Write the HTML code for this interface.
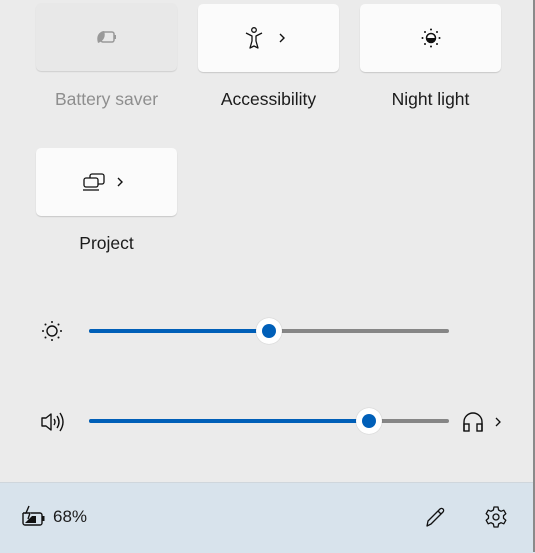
<!DOCTYPE html>
<html><head><style>
body{margin:0;width:535px;height:552px;overflow:hidden;background:#ebebeb;font-family:"Segoe UI","Liberation Sans",sans-serif;position:relative}
.b{position:absolute;width:141px;height:68px;background:#fbfbfb;border-radius:5px;box-shadow:0 1px 1px rgba(0,0,0,.15);display:flex;align-items:center;justify-content:center}
.l{position:absolute;width:141px;text-align:center;font-size:17.5px;color:#1b1b1b}
.tr{position:absolute;height:4px;border-radius:2px;background:#868686}
.tf{position:absolute;height:4px;border-radius:2px;background:#005fb8}
.th{position:absolute;width:26px;height:26px;border-radius:50%;background:#fff;box-shadow:0 0 1px rgba(0,0,0,.3)}
.th::after{content:"";position:absolute;left:6px;top:6px;width:14px;height:14px;border-radius:50%;background:#005fb8}
svg{display:block}
</style></head><body>
<div class="b" style="left:36px;top:3px;background:#e8e8e8;box-shadow:0 1px 1px rgba(0,0,0,.12)">
<svg width="26" height="18" viewBox="0 0 26 18"><rect x="7" y="4" width="13" height="10" rx="2" fill="none" stroke="#999" stroke-width="1.5"/><rect x="20" y="7" width="2" height="4" fill="#999"/><path d="M10 3 C4 4 2 9 4 15 C10 13 12 8 10 3Z" fill="#999"/></svg></div>
<div class="b" style="left:198px;top:4px">
<svg width="50" height="24" viewBox="0 0 50 24"><circle cx="10" cy="4" r="2.3" fill="none" stroke="#111" stroke-width="1.3"/><path d="M2 7 L8 10 L8 15 L6 22 L10 20 L14 22 L12 15 L12 10 L18 7" fill="none" stroke="#111" stroke-width="1.3" stroke-linejoin="round"/><path d="M36 8 L40 12 L36 16" fill="none" stroke="#111" stroke-width="1.4"/></svg></div>
<div class="b" style="left:360px;top:4px">
<svg width="24" height="24" viewBox="0 0 24 24"><circle cx="12" cy="12" r="4.5" fill="none" stroke="#111" stroke-width="1.5"/><path d="M12 12 m-4.5 0 a4.5 4.5 0 0 0 9 0Z" fill="#111"/><g fill="#111"><circle cx="12" cy="3.5" r="1"/><circle cx="12" cy="20.5" r="1"/><circle cx="3.5" cy="12" r="1"/><circle cx="20.5" cy="12" r="1"/><circle cx="6" cy="6" r="1"/><circle cx="18" cy="6" r="1"/><circle cx="6" cy="18" r="1"/><circle cx="18" cy="18" r="1"/></g></svg></div>
<div class="b" style="left:36px;top:148px">
<svg width="50" height="24" viewBox="0 0 50 24"><rect x="8" y="4" width="14" height="10" rx="2" fill="none" stroke="#111" stroke-width="1.3"/><rect x="2" y="8" width="14" height="9" rx="2" fill="#fbfbfb" stroke="#111" stroke-width="1.3"/><path d="M1 20 H17" stroke="#111" stroke-width="1.3"/><path d="M36 8 L40 12 L36 16" fill="none" stroke="#111" stroke-width="1.4"/></svg></div>
<div class="l" style="left:36px;top:89px;color:#8e8e8e">Battery saver</div>
<div class="l" style="left:198px;top:89px">Accessibility</div>
<div class="l" style="left:360px;top:89px">Night light</div>
<div class="l" style="left:36px;top:233px">Project</div>

<svg style="position:absolute;left:40px;top:319px" width="24" height="24" viewBox="0 0 24 24"><circle cx="12" cy="12" r="5" fill="none" stroke="#111" stroke-width="1.4"/><g fill="#111"><circle cx="12" cy="3" r="1"/><circle cx="12" cy="21" r="1"/><circle cx="3" cy="12" r="1"/><circle cx="21" cy="12" r="1"/><circle cx="5.5" cy="5.5" r="1"/><circle cx="18.5" cy="5.5" r="1"/><circle cx="5.5" cy="18.5" r="1"/><circle cx="18.5" cy="18.5" r="1"/></g></svg>
<div class="tr" style="left:89px;top:329px;width:360px"></div>
<div class="tf" style="left:89px;top:329px;width:180px"></div>
<div class="th" style="left:256px;top:318px"></div>

<svg style="position:absolute;left:40px;top:410px" width="26" height="24" viewBox="0 0 26 24"><path d="M2 8 H6 L11 4 V20 L6 16 H2Z" fill="none" stroke="#111" stroke-width="1.4" stroke-linejoin="round"/><path d="M14 9 Q16 12 14 15 M17 6 Q21 12 17 18 M20 3 Q26 12 20 21" fill="none" stroke="#111" stroke-width="1.4"/></svg>
<div class="tr" style="left:89px;top:419px;width:360px"></div>
<div class="tf" style="left:89px;top:419px;width:280px"></div>
<div class="th" style="left:356px;top:408px"></div>
<svg style="position:absolute;left:462px;top:410px" width="42" height="24" viewBox="0 0 42 24"><path d="M2 21 V12 A9 9 0 0 1 20 12 V21" fill="none" stroke="#111" stroke-width="1.4"/><rect x="2" y="14" width="5" height="7" fill="none" stroke="#111" stroke-width="1.4"/><rect x="15" y="14" width="5" height="7" fill="none" stroke="#111" stroke-width="1.4"/><path d="M34 8 L38 12 L34 16" fill="none" stroke="#111" stroke-width="1.3"/></svg>

<div style="position:absolute;left:0;top:482px;width:535px;height:70px;background:#d8e3ec;border-top:1px solid #cfd6dc"></div>
<div style="position:absolute;right:0;top:0;width:2px;height:552px;background:#8a8a8a"></div>
<svg style="position:absolute;left:21px;top:505px" width="26" height="24" viewBox="0 0 26 24"><path d="M2 8 H5 M10 8 H19 A2 2 0 0 1 21 10 V18 A2 2 0 0 1 19 20 H4 A2 2 0 0 1 2 18 V8" fill="none" stroke="#111" stroke-width="1.4"/><rect x="21.5" y="11" width="2" height="5" fill="#111"/><path d="M4 18 H15 V11 L11 11 L4 18Z" fill="#111"/><path d="M8 1 L5 8 H9 L7 14" fill="none" stroke="#111" stroke-width="1.4"/></svg>
<div style="position:absolute;left:53px;top:507px;font-size:17px;color:#1b1b1b">68%</div>
<svg style="position:absolute;left:423px;top:505px" width="24" height="24" viewBox="0 0 24 24"><path d="M4 21 L5 16 L17 4 A2 2 0 0 1 20 7 L8 19Z M15 6 L18 9" fill="none" stroke="#111" stroke-width="1.3" stroke-linejoin="round"/></svg>
<svg style="position:absolute;left:484px;top:505px" width="24" height="24" viewBox="0 0 24 24"><path d="M10 2 H14 L14.6 5 L17 6.3 L19.8 5.2 L21.8 8.7 L19.5 10.7 V13.3 L21.8 15.3 L19.8 18.8 L17 17.7 L14.6 19 L14 22 H10 L9.4 19 L7 17.7 L4.2 18.8 L2.2 15.3 L4.5 13.3 V10.7 L2.2 8.7 L4.2 5.2 L7 6.3 L9.4 5Z" fill="none" stroke="#111" stroke-width="1.3" stroke-linejoin="round"/><circle cx="12" cy="12" r="3" fill="none" stroke="#111" stroke-width="1.3"/></svg>
</body></html>
